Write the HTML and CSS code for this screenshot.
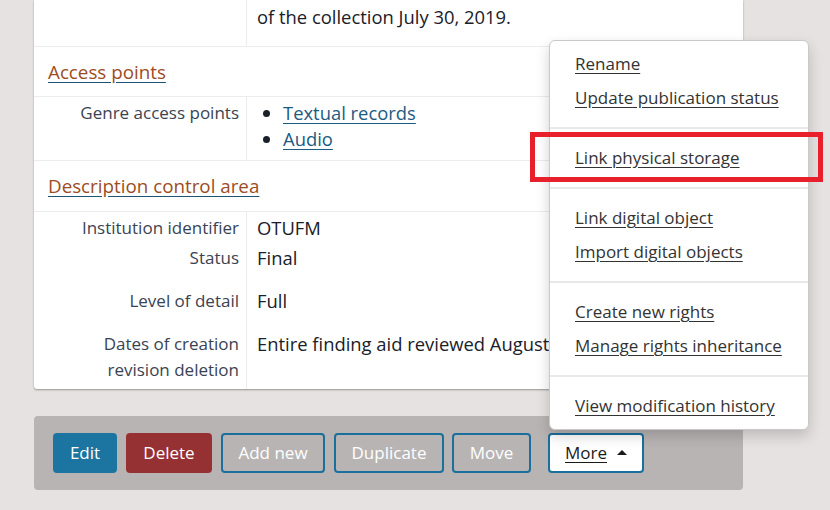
FILE: index.html
```html
<!DOCTYPE html>
<html lang="en">
<head>
<meta charset="utf-8">
<title>Description</title>
<link rel="stylesheet" href="styles.css">
</head>
<body>
<div class="page">
  <section class="card">
    <div class="field first">
      <div class="label"></div>
      <div class="value">of the collection July 30, 2019.</div>
    </div>
    <h2 class="section-head"><a href="#">Access points</a></h2>
    <div class="field genre">
      <div class="label">Genre access points</div>
      <div class="value">
        <ul class="terms">
          <li><a href="#">Textual records</a></li>
          <li><a href="#">Audio</a></li>
        </ul>
      </div>
    </div>
    <h2 class="section-head second"><a href="#">Description control area</a></h2>
    <div class="control">
      <div class="field row-inst">
        <div class="label">Institution identifier</div>
        <div class="value">OTUFM</div>
      </div>
      <div class="field row-status">
        <div class="label">Status</div>
        <div class="value">Final</div>
      </div>
      <div class="field row-level">
        <div class="label">Level of detail</div>
        <div class="value">Full</div>
      </div>
      <div class="field row-dates">
        <div class="label">Dates of creation<br>revision deletion</div>
        <div class="value">Entire finding aid reviewed August 2019.</div>
      </div>
    </div>
  </section>

  <section class="actions">
    <button class="btn btn-edit">Edit</button>
    <button class="btn btn-delete">Delete</button>
    <button class="btn btn-outline btn-add">Add new</button>
    <button class="btn btn-outline btn-dup">Duplicate</button>
    <button class="btn btn-outline btn-move">Move</button>
    <div class="more-wrap">
      <button class="btn btn-more"><span class="more-label">More</span><span class="caret"></span></button>
      <ul class="dropdown">
        <li><a href="#">Rename</a></li>
        <li><a href="#">Update publication status</a></li>
        <li class="divider"></li>
        <li><a href="#">Link physical storage</a></li>
        <li class="divider"></li>
        <li><a href="#">Link digital object</a></li>
        <li><a href="#">Import digital objects</a></li>
        <li class="divider"></li>
        <li><a href="#">Create new rights</a></li>
        <li><a href="#">Manage rights inheritance</a></li>
        <li class="divider"></li>
        <li><a href="#">View modification history</a></li>
      </ul>
    </div>
  </section>

  <div class="highlight"></div>
</div>
</body>
</html>
```

FILE: styles.css
```css
* { box-sizing: border-box; }

html, body {
  margin: 0;
  padding: 0;
  height: 100%;
  overflow: hidden;
}

body {
  background: #e6e2e1;
  font-family: "Open Sans", "Noto Sans", sans-serif;
  color: #212529;
  font-size: 16px;
}

.page {
  position: relative;
  width: 830px;
  height: 510px;
  padding-left: 34px;
}

.card {
  width: 709px;
  background: #fff;
  border-radius: 0 0 3px 3px;
  box-shadow: 0 1px 2px rgba(0, 0, 0, 0.35);
  overflow: hidden;
}

.field {
  display: grid;
  grid-template-columns: 213px 1fr;
}

.label {
  border-right: 1px solid #ececec;
  text-align: right;
  padding-right: 7px;
  font-size: 17px;
  line-height: 26px;
  color: #3a4352;
}

.value {
  padding-left: 10px;
  font-size: 18.4px;
  line-height: 26px;
  color: #1a2029;
  white-space: nowrap;
  overflow: hidden;
}

.first {
  height: 47px;
  border-bottom: 1px solid #ececec;
}
.first .value { padding-top: 4px; }

.section-head {
  margin: 0;
  height: 50px;
  padding: 12px 14px 0;
  font-size: 18.8px;
  font-weight: 400;
  line-height: 26px;
  border-bottom: 1px solid #ececec;
}
.section-head.second { height: 51px; }
.section-head a {
  color: #9c4c1e;
  text-decoration: underline;
  text-decoration-color: #1d5475;
  text-underline-offset: 3px;
}

.genre {
  height: 64px;
  border-bottom: 1px solid #ececec;
}
.genre .label,
.genre .value { padding-top: 3px; }

.terms {
  margin: 0;
  padding-left: 26px;
  list-style: disc;
}
.terms li::marker { color: #1a2029; }
.terms a {
  color: #1b5a82;
  text-decoration: underline;
  text-underline-offset: 3px;
}

.control .label,
.control .value { padding-top: 3px; }

.row-inst { height: 30px; }
.row-status { height: 43px; }
.row-level { height: 43px; }
.row-dates { height: 61px; }

.actions {
  margin-top: 27px;
  width: 709px;
  height: 74px;
  background: #b8b4b3;
  border-radius: 4px;
  padding: 19px 19px;
  display: flex;
  align-items: center;
  gap: 9px;
}

.btn {
  height: 40px;
  font-family: "Open Sans", "Noto Sans", sans-serif;
  font-size: 17px;
  color: #fff;
  border-radius: 4px;
  border: 2px solid transparent;
  padding: 0;
  background: transparent;
  line-height: 36px;
}
.btn-edit {
  background: #1b75a0;
  border-color: #1b75a0;
  width: 64px;
}
.btn-delete {
  background: #963133;
  border-color: #963133;
  width: 86px;
}
.btn-outline { border-color: #1b6f9c; }
.btn-add { width: 104px; }
.btn-dup { width: 110px; }
.btn-move { width: 79px; margin-left: -1px; }

.more-wrap {
  position: relative;
  margin-left: 8px;
}
.btn-more {
  background: #fff;
  border-color: #1b6f9c;
  color: #1a1a1a;
  width: 96px;
  display: flex;
  align-items: center;
  justify-content: center;
}
.more-label {
  text-decoration: underline;
  text-underline-offset: 3px;
  padding-right: 4px;
}
.caret {
  display: inline-block;
  width: 0;
  height: 0;
  margin-left: 6px;
  margin-bottom: 2px;
  border-left: 5px solid transparent;
  border-right: 5px solid transparent;
  border-bottom: 5px solid #1a1a1a;
}

.dropdown {
  position: absolute;
  left: 1px;
  bottom: calc(100% + 3px);
  width: 260px;
  margin: 0;
  padding: 6px 0;
  list-style: none;
  background: #fff;
  border: 1px solid #c9c9c9;
  border-radius: 6px;
  box-shadow: 0 6px 14px rgba(0, 0, 0, 0.18);
}
.dropdown li a {
  display: block;
  padding: 5px 25px;
  font-size: 17px;
  line-height: 24px;
  color: #333;
  text-decoration: underline;
  text-underline-offset: 3px;
  white-space: nowrap;
}
.dropdown .divider {
  height: 2px;
  margin: 12px 0;
  background: #e8e8e8;
}

.highlight {
  position: absolute;
  left: 530px;
  top: 132px;
  width: 293px;
  height: 50px;
  border: 5px solid #e8202b;
}
```
